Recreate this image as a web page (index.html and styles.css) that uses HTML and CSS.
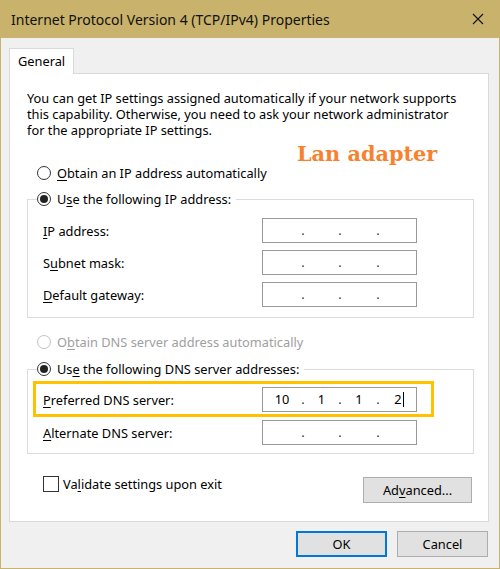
FILE: index.html
```html
<!DOCTYPE html>
<html>
<head>
<meta charset="utf-8">
<link rel="stylesheet" href="styles.css">
</head>
<body>
<div class="window">
  <div class="titlebar">
    <span class="title">Internet Protocol Version 4 (TCP/IPv4) Properties</span>
    <svg class="close" width="12" height="12" viewBox="0 0 12 12"><path d="M1 1 L11 11 M11 1 L1 11" stroke="#111" stroke-width="1.1" fill="none"/></svg>
  </div>
  <div class="client">
    <div class="tabs"><div class="tab">General</div></div>
    <div class="panel">
      <div class="note">Lan adapter</div>
      <p class="intro">You can get IP settings assigned automatically if your network supports<br>this capability. Otherwise, you need to ask your network administrator<br>for the appropriate IP settings.</p>

      <div class="radio-row"><span class="radio"></span><span><u>O</u>btain an IP address automatically</span></div>

      <fieldset class="group">
        <legend class="legend"><span class="radio checked"></span><span>U<u>s</u>e the following IP address:</span></legend>
        <div class="rows first">
          <div class="row"><span class="label"><u>I</u>P address:</span><div class="ip"><span></span><i>.</i><span></span><i>.</i><span></span><i>.</i><span></span></div></div>
          <div class="row"><span class="label">S<u>u</u>bnet mask:</span><div class="ip"><span></span><i>.</i><span></span><i>.</i><span></span><i>.</i><span></span></div></div>
          <div class="row"><span class="label"><u>D</u>efault gateway:</span><div class="ip"><span></span><i>.</i><span></span><i>.</i><span></span><i>.</i><span></span></div></div>
        </div>
      </fieldset>

      <div class="radio-row disabled dns-auto"><span class="radio"></span><span>O<u>b</u>tain DNS server address automatically</span></div>

      <fieldset class="group group-dns">
        <legend class="legend"><span class="radio checked"></span><span>Us<u>e</u> the following DNS server addresses:</span></legend>
        <div class="rows second">
          <div class="row highlighted"><span class="label"><u>P</u>referred DNS server:</span><div class="ip"><span>10</span><i>.</i><span>1</span><i>.</i><span>1</span><i>.</i><span class="last">2<b class="caret"></b></span></div></div>
          <div class="row"><span class="label"><u>A</u>lternate DNS server:</span><div class="ip"><span></span><i>.</i><span></span><i>.</i><span></span><i>.</i><span></span></div></div>
        </div>
      </fieldset>

      <div class="bottom-row">
        <div class="check-row"><span class="checkbox"></span><span>Va<u>l</u>idate settings upon exit</span></div>
        <button class="btn advanced">Ad<u>v</u>anced...</button>
      </div>
    </div>
    <div class="actions">
      <button class="btn ok">OK</button>
      <button class="btn cancel">Cancel</button>
    </div>
  </div>
</div>
</body>
</html>
```

FILE: styles.css
```css
* { box-sizing: border-box; }
html, body { margin: 0; padding: 0; }
body {
  width: 500px;
  height: 569px;
  overflow: hidden;
  font-family: "Noto Sans", "Open Sans", sans-serif;
  font-size: 12.8px;
  color: #000;
  background: #c9b26b;
}
u { text-decoration: underline; text-underline-offset: 2px; }

.window {
  width: 500px;
  height: 569px;
  border: 1px solid #c9b26b;
  border-top: none;
  background: #f0f0f0;
  display: flex;
  flex-direction: column;
}
.titlebar {
  height: 38px;
  flex: none;
  background: #c9b26b;
  display: flex;
  align-items: center;
  justify-content: space-between;
  padding: 0 15px 0 10px;
}
.title { font-size: 14px; color: #111; }
.close { display: block; }

.client {
  padding: 10px 10px 0 8px;
  flex: 1;
}
.tabs { display: flex; }
.tab {
  position: relative;
  z-index: 1;
  width: 65px;
  height: 26px;
  margin-bottom: -1px;
  background: #fff;
  border: 1px solid #d9d9d9;
  border-bottom: none;
  padding: 5px 0 0 8px;
  line-height: 15px;
}
.panel {
  position: relative;
  background: #fff;
  border: 1px solid #d9d9d9;
  padding: 16px 15px 18px 17px;
}
.note {
  position: absolute;
  left: 287px;
  top: 69px;
  font-family: "DejaVu Serif", "Liberation Serif", serif;
  font-weight: bold;
  font-size: 20.8px;
  line-height: 22px;
  color: #f5822f;
}
.intro {
  margin: 0;
  line-height: 16px;
}
.radio-row {
  display: flex;
  align-items: center;
  height: 16px;
  margin: 27px 0 0 10px;
  gap: 6px;
}
.radio-row.dns-auto { margin-top: 16px; }
.radio-row.disabled { color: #a0a0a0; }
.radio {
  width: 14px;
  height: 14px;
  border: 1px solid #333;
  border-radius: 50%;
  background: #fff;
  display: flex;
  align-items: center;
  justify-content: center;
  flex: none;
}
.disabled .radio { border-color: #c2c2c2; }
.radio.checked::after {
  content: "";
  width: 8px;
  height: 8px;
  border-radius: 50%;
  background: #222;
}

.group {
  margin: 10px 0 0 0;
  padding: 0 0 10px 0;
  border: 1px solid #dcdcdc;
  width: 447px;
  min-width: 0;
}
.group-dns { margin-top: 11px; padding-bottom: 8px; }
.legend {
  display: flex;
  align-items: center;
  gap: 6px;
  height: 16px;
  margin-left: 9px;
  padding: 0 5px 0 0;
}
.rows {
  display: flex;
  flex-direction: column;
  gap: 7px;
  margin-top: 11px;
}
.rows.second { margin-top: 10px; gap: 8px; }
.row {
  display: grid;
  grid-template-columns: 219px 155px;
  align-items: center;
  padding-left: 15px;
  height: 25px;
  position: relative;
}
.row.highlighted::before {
  content: "";
  position: absolute;
  left: 5px;
  top: -6px;
  right: 39px;
  bottom: -5px;
  border: 3px solid #fdc300;
  pointer-events: none;
}
.ip {
  height: 25px;
  border: 1px solid #999;
  background: #fff;
  display: grid;
  grid-template-columns: 38px 4px 33px 4px 34px 4px 36px;
  align-items: center;
  line-height: 15px;
}
.ip span { text-align: center; position: relative; }
.ip i { font-style: normal; text-align: center; color: #333; }
.caret {
  position: absolute;
  top: 0;
  width: 1px;
  height: 15px;
  background: #000;
  margin-left: 1px;
}

.bottom-row {
  display: flex;
  justify-content: space-between;
  align-items: flex-start;
  margin-top: 22px;
  padding-left: 16px;
}
.check-row {
  display: flex;
  align-items: center;
  gap: 4px;
  height: 16px;
}
.checkbox {
  width: 16px;
  height: 16px;
  border: 1px solid #333;
  background: #fff;
}
.btn {
  font: inherit;
  color: #000;
  height: 26px;
  background: #e1e1e1;
  border: 1px solid #adadad;
  padding: 0;
  line-height: 15px;
}
.advanced {
  width: 109px;
  margin-top: 1px;
  margin-right: 1px;
}
.actions {
  display: flex;
  justify-content: flex-end;
  gap: 10px;
  margin-top: 9px;
}
.ok { width: 91px; border: 2px solid #0078d7; }
.cancel { width: 91px; margin-right: 1px; }
```
